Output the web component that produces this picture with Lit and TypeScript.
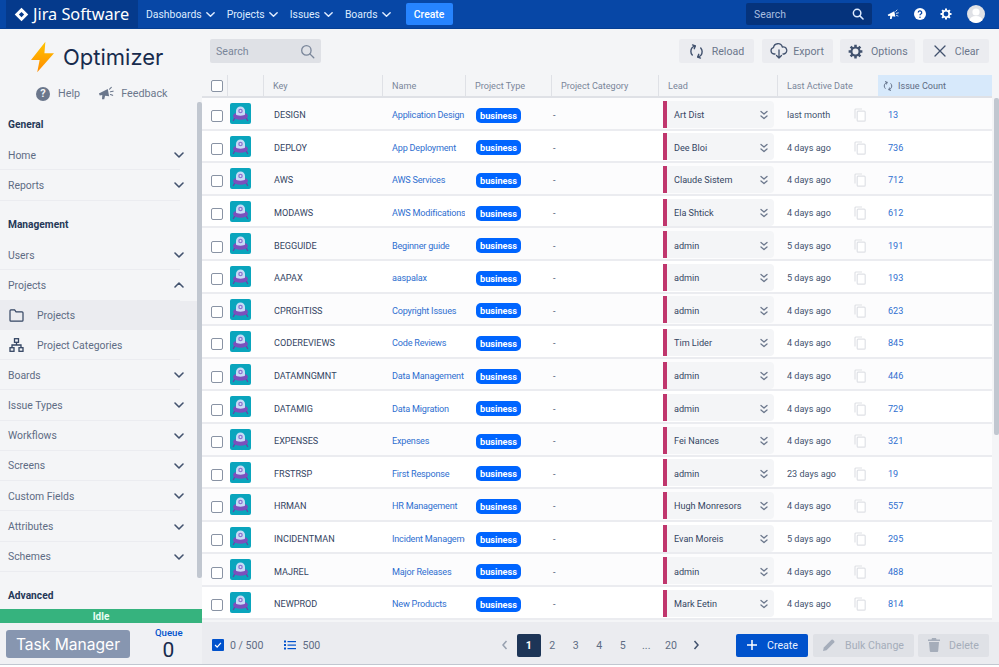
import { LitElement, html, css } from "lit";
import { customElement } from "lit/decorators.js";

const chevDown = html`<svg class="chev" viewBox="0 0 12 12" width="12" height="12"><path d="M2 4l4 4 4-4" fill="none" stroke="currentColor" stroke-width="1.6" stroke-linecap="round" stroke-linejoin="round"/></svg>`;
const chevUp = html`<svg class="chev" viewBox="0 0 12 12" width="12" height="12"><path d="M2 8l4-4 4 4" fill="none" stroke="currentColor" stroke-width="1.6" stroke-linecap="round" stroke-linejoin="round"/></svg>`;
const megaphone = (s: number) => html`<svg viewBox="0 0 18 16" width="${s}" height="${s * 16 / 18}"><path d="M1 8.5l10-5 1.5 8-4.5-.6L7 15H4.5l.3-5L2 10.6z" fill="currentColor"/><path d="M13 3.5l2-2M14 6.5l3-.7M14 9.5l2.5 1" stroke="currentColor" stroke-width="1.2" fill="none" stroke-linecap="round"/></svg>`;
const gear = (s: number) => html`<svg viewBox="0 0 24 24" width="${s}" height="${s}"><path fill="none" stroke="currentColor" stroke-width="3.4" d="M12 5.5a6.5 6.5 0 1 0 0 13 6.5 6.5 0 0 0 0-13z"/><g stroke="currentColor" stroke-width="4"><path d="M12 1v4M12 19v4M1 12h4M19 12h4M4.2 4.2l2.9 2.9M16.9 16.9l2.9 2.9M4.2 19.8l2.9-2.9M16.9 7.1l2.9-2.9"/></g></svg>`;
const reload = (s: number) => html`<svg viewBox="0 0 16 16" width="${s}" height="${s}" fill="none" stroke="currentColor" stroke-width="1.5" stroke-linecap="round" stroke-linejoin="round"><path d="M6.5 2.2C3.8 2.8 2 5 2 8c0 1.5.6 2.8 1.5 3.8"/><path d="M3.8 1l2.9 1.1L5.6 5"/><path d="M9.5 13.8C12.2 13.2 14 11 14 8c0-1.5-.6-2.8-1.5-3.8"/><path d="M12.2 15l-2.9-1.1 1.1-2.9"/></svg>`;
const search = (s: number, w = 1.4) => html`<svg viewBox="0 0 16 16" width="${s}" height="${s}" fill="none" stroke="currentColor" stroke-width="${w}" stroke-linecap="round"><circle cx="6.8" cy="6.8" r="5"/><path d="M10.5 10.5l4.2 4.2"/></svg>`;
const saucer = html`<svg class="pic" viewBox="0 0 21 21" width="21" height="21">
  <rect width="21" height="21" rx="2" fill="#0aa5bd"/>
  <path d="M5 14.5l-1.6 3M16 14.5l1.6 3" stroke="#6a3fa8" stroke-width="1.3" stroke-linecap="round"/>
  <ellipse cx="10.5" cy="13" rx="7.5" ry="3.8" fill="#7b50bd"/>
  <path d="M6 11.5V8a4.5 4.5 0 0 1 9 0v3.5c0 1.5-9 1.5-9 0z" fill="#c6dcf6"/>
  <circle cx="10.5" cy="8" r="2.3" fill="#8d72d0"/><circle cx="10.5" cy="8" r="1" fill="#d7e6fa"/>
</svg>`;
const copy = html`<svg class="copy" viewBox="0 0 12 14" width="12" height="14" fill="none" stroke="#dfe1e6" stroke-width="1.2"><path d="M1 10.5V2a1 1 0 0 1 1-1h6"/><rect x="3.2" y="3.2" width="8" height="10" rx="1" fill="#fff"/></svg>`;
const dbl = html`<svg class="dbl" viewBox="0 0 10 12" width="10" height="12" fill="none" stroke="#6b778c" stroke-width="1.3" stroke-linecap="round" stroke-linejoin="round"><path d="M2 2.5l3 2.5 3-2.5M2 7l3 2.5L8 7"/></svg>`;

const rows: [string, string, string, string, string][] = [
  ["DESIGN", "Application Design", "Art Dist", "last month", "13"],
  ["DEPLOY", "App Deployment", "Dee Bloi", "4 days ago", "736"],
  ["AWS", "AWS Services", "Claude Sistem", "4 days ago", "712"],
  ["MODAWS", "AWS Modifications", "Ela Shtick", "4 days ago", "612"],
  ["BEGGUIDE", "Beginner guide", "admin", "5 days ago", "191"],
  ["AAPAX", "aaspalax", "admin", "5 days ago", "193"],
  ["CPRGHTISS", "Copyright Issues", "admin", "4 days ago", "623"],
  ["CODEREVIEWS", "Code Reviews", "Tim Lider", "4 days ago", "845"],
  ["DATAMNGMNT", "Data Management", "admin", "4 days ago", "446"],
  ["DATAMIG", "Data Migration", "admin", "4 days ago", "729"],
  ["EXPENSES", "Expenses", "Fei Nances", "4 days ago", "321"],
  ["FRSTRSP", "First Response", "admin", "23 days ago", "19"],
  ["HRMAN", "HR Management", "Hugh Monresors", "4 days ago", "557"],
  ["INCIDENTMAN", "Incident Management", "Evan Moreis", "5 days ago", "295"],
  ["MAJREL", "Major Releases", "admin", "4 days ago", "488"],
  ["NEWPROD", "New Products", "Mark Eetin", "4 days ago", "814"],
];

@customElement("app-root")
export class AppRoot extends LitElement {
  static styles = css`
    :host { display: flex; flex-direction: column; width: 999px; height: 667px; overflow: hidden; background: #fff;
      font-family: Roboto, "Noto Sans", sans-serif; font-size: 10px; color: #42526e; }
    * { box-sizing: border-box; }
    svg { display: block; flex: none; }

    header { height: 29px; flex: none; display: flex; align-items: center; background: #0747a6; color: #deebff; border-bottom: 1px solid #053f94; padding-left: 6px; }
    .logo { width: 132px; height: 28px; background: #053a8c; display: flex; align-items: center; gap: 4px; padding-left: 8px; color: #fff; font-family: "Noto Sans", sans-serif; font-size: 16.3px; white-space: nowrap; }
    .nav { display: flex; align-items: center; margin-left: 8px; font-size: 10.4px; }
    .nav .it { display: flex; align-items: center; gap: 3px; margin-right: 11px; }
    .nav .chev { width: 11px; height: 11px; }
    .hcreate { margin-left: 3px; width: 47px; height: 22px; background: #2684ff; color: #fff; border-radius: 2px; font-weight: 500; font-size: 10.4px; display: flex; align-items: center; justify-content: center; }
    .hsearch { margin-left: auto; width: 126px; height: 22px; background: #05337c; border-radius: 2px; display: flex; align-items: center; justify-content: space-between; padding: 0 8px; color: #a9bfe0; font-size: 10.4px; }
    .hsearch svg { color: #deebff; }
    .hicons { display: flex; align-items: center; gap: 14.5px; margin-left: 15px; margin-right: 14.5px; color: #fff; }
    .avatar { width: 18px; height: 18px; border-radius: 50%; background: #dfe1e6; overflow: hidden; }

    .body { flex: 1; display: flex; min-height: 0; }
    aside { width: 202px; flex: none; display: flex; flex-direction: column; background: #f4f5f7; position: relative; }
    .brand { height: 79px; flex: none; padding-top: 12px; }
    .brandrow { display: flex; align-items: center; padding-left: 31px; gap: 9px; height: 32px; font-family: Inter, sans-serif; font-size: 22px; color: #172b4d; }
    .links { display: flex; align-items: center; padding-left: 36px; height: 15px; margin-top: 13px; font-size: 10.8px; color: #6b778c; }
    .links .help { width: 14px; height: 14px; border-radius: 50%; background: #6b778c; color: #f4f5f7; font-weight: 700; font-size: 11px; display: flex; align-items: center; justify-content: center; margin-right: 8px; }
    .links .mega { margin-left: 18px; margin-right: 7px; }
    .snav { flex: 1; min-height: 0; overflow: hidden; }
    .head { height: 32px; display: flex; align-items: center; padding: 1px 0 0 8px; font-size: 10.2px; font-weight: 700; color: #253858; }
    .head.sp { margin-top: 7.4px; }
    .item { height: 30.3px; display: flex; align-items: center; justify-content: space-between; width: 180px; padding: 1px 0 0 8px; border-bottom: 1px solid #ebecf0; font-size: 10.4px; color: #5e6c84; }
    .item .chev { margin-right: -5px; color: #42526e; }
    .sub { height: 29.7px; width: 197px; display: flex; align-items: center; padding-left: 9px; gap: 13px; font-size: 10.4px; color: #5e6c84; }
    .sub.on { background: #ebecf0; }
    .sub svg { color: #344563; }
    .rule { width: 180px; height: 1px; background: #ebecf0; margin-top: -1px; }
    .sbar { position: absolute; left: 197px; top: 73px; width: 5px; height: 476px; background: #c1c7d0; border-radius: 2px; }
    .idle { height: 14px; flex: none; background: #36b37e; color: #e9fff4; font-weight: 700; font-size: 10px; display: flex; align-items: center; justify-content: center; }
    .tm { height: 41px; flex: none; background: #f0f1f4; display: flex; align-items: flex-start; padding: 7px 0 0 6px; }
    .tmb { width: 124px; height: 28px; background: #8796b0; border-radius: 3px; color: #fff; font-family: Inter, sans-serif; font-size: 15.6px; display: flex; align-items: center; justify-content: center; }
    .queue { margin-left: 25px; width: 27px; text-align: center; color: #0052cc; font-size: 9.6px; font-weight: 500; line-height: 11px; margin-top: -3px; }
    .queue b { display: block; font-weight: 400; font-size: 21px; line-height: 24px; color: #172b4d; }

    main { flex: 1; min-width: 0; display: flex; flex-direction: column; background: #f4f5f7; position: relative; }
    .tools { height: 46px; flex: none; display: flex; align-items: flex-start; padding-top: 10px; padding-left: 8px; padding-right: 10px; }
    .tsearch { width: 111px; height: 24px; background: #dfe1e6; border-radius: 2px; display: flex; align-items: center; justify-content: space-between; padding: 0 6px; color: #7a869a; font-size: 10.6px; }
    .btns { margin-left: auto; display: flex; gap: 7.7px; }
    .btn { height: 24px; background: #ebecf0; border-radius: 2px; display: flex; align-items: center; justify-content: center; gap: 8px; font-size: 10.6px; color: #6b778c; }
    .btn svg { color: #42526e; }
    .w75 { width: 75px; }
    .w71 { width: 71px; gap: 5px; }
    .w66 { width: 66px; }

    .table { flex: 1; min-height: 0; overflow: hidden; width: 790px; }
    .r { display: grid; grid-template-columns: 25px 36px 119px 83px 86px 107px 119px 101px 114px; align-items: center; }
    .thead { height: 23px; border-bottom: 2px solid #dfe1e6; color: #7a869a; font-size: 9.1px; }
    .thead > div { height: 21px; display: flex; align-items: center; padding: 1px 0 0 9px; border-left: 1px solid #dfe1e6; }
    .thead > div:first-child { border-left: none; }
    .thead .cnt { background: #d7e9fb; border-left: none; gap: 5px; color: #5e6c84; padding-left: 5px; }
    .tr { height: 32.6px; padding-top: 4px; background: #fff; border-bottom: 2px solid #ebecf0; font-size: 9.1px; color: #42526e; align-items: stretch; }
    .tr:nth-child(odd) { background: #fcfcfd; }
    .tr > div { display: flex; align-items: center; min-width: 0; white-space: nowrap; overflow: hidden; }
    .cb { width: 12px; height: 12px; border: 1.5px solid #8993a4; border-radius: 2px; background: #fff; }
    .tr .c0 { padding-left: 9px; padding-top: 2px; }
    .tr .c1 { padding-left: 3px; align-items: flex-start; padding-top: 1px; }
    .tr .c2 { padding-left: 11px; color: #344563; }
    .tr .c3 { padding-left: 10px; color: #2f6fd0; letter-spacing: -0.2px; }
    .tr .c4 { padding-left: 11px; }
    .badge { height: 15px; width: 45px; border-radius: 5px; background: #0065ff; color: #fff; font-weight: 700; font-size: 9.2px; display: flex; align-items: center; justify-content: center; }
    .tr .c5 { padding-left: 2px; }
    .tr .c6 { padding: 0; overflow: visible; }
    .lead { margin-left: 5px; margin-top: -2px; width: 111px; height: 27px; background: #f4f5f7; border-left: 4px solid #c0366d; border-radius: 0 4px 4px 0; display: flex; align-items: center; justify-content: space-between; padding: 2px 5px 0 7px; color: #344563; }
    .tr .c7 { padding-left: 10px; justify-content: space-between; padding-right: 12px; color: #42526e; }
    .tr .c8 { padding-left: 10px; color: #2f6fd0; }
    .vbar { position: absolute; left: 792px; top: 69px; width: 5px; height: 337px; background: #c1c7d0; border-radius: 2px; }

    .foot { height: 42px; flex: none; background: #ebecf0; display: flex; align-items: center; padding: 4px 10px 0 10px; font-size: 10.6px; color: #5e6c84; }
    .left { width: 281px; flex: none; display: flex; align-items: center; }
    .chk { width: 12px; height: 12px; background: #0052cc; border-radius: 1px; display: flex; align-items: center; justify-content: center; margin-right: 6px; }
    .count { margin-left: 21px; display: flex; align-items: center; gap: 6px; }
    .count svg { color: #0052cc; }
    .pages { display: flex; align-items: center; color: #5e6c84; }
    .pages .p { width: 23.5px; height: 23px; display: flex; align-items: center; justify-content: center; }
    .pages .cur { background: #1d3557; color: #fff; border-radius: 2px; font-weight: 700; }
    .pages .arr { width: 24px; color: #97a0af; }
    .pages .next { color: #42526e; }
    .pages .wide { width: 26px; }
    .fbtns { margin-left: auto; display: flex; gap: 4.5px; }
    .act { height: 23px; border-radius: 2px; display: flex; align-items: center; justify-content: center; gap: 9px; background: #dfe1e6; color: #a5adba; }
    .act.pri { background: #0052cc; color: #e9f1ff; width: 72px; }
    .act.bulk { width: 101px; }
    .act.del { width: 71px; }
    .strip { height: 3px; flex: none; background: #fff; border-top: 1px solid #c1c7d0; }
  `;

  renderRow(r: [string, string, string, string, string]) {
    return html`<div class="r tr">
      <div class="c0"><div class="cb"></div></div>
      <div class="c1">${saucer}</div>
      <div class="c2">${r[0]}</div>
      <div class="c3">${r[1]}</div>
      <div class="c4"><div class="badge">business</div></div>
      <div class="c5">-</div>
      <div class="c6"><div class="lead"><span>${r[2]}</span>${dbl}</div></div>
      <div class="c7"><span>${r[3]}</span>${copy}</div>
      <div class="c8">${r[4]}</div>
    </div>`;
  }

  render() {
    const item = (t: string, up = false) => html`<div class="item"><span>${t}</span>${up ? chevUp : chevDown}</div>`;
    return html`
      <header>
        <div class="logo">
          <svg viewBox="0 0 16 16" width="15" height="15"><path d="M8 .8L15.2 8 8 15.2.8 8z" fill="#fff"/><path d="M8 5.2L10.8 8 8 10.8 5.2 8z" fill="#053a8c"/></svg>
          <span>Jira Software</span>
        </div>
        <div class="nav">
          <div class="it">Dashboards ${chevDown}</div>
          <div class="it">Projects ${chevDown}</div>
          <div class="it">Issues ${chevDown}</div>
          <div class="it">Boards ${chevDown}</div>
        </div>
        <div class="hcreate">Create</div>
        <div class="hsearch"><span>Search</span>${search(12, 2)}</div>
        <div class="hicons">
          ${megaphone(12)}
          <svg viewBox="0 0 14 14" width="12" height="12"><circle cx="7" cy="7" r="7" fill="#fff"/><path d="M5 5.3a2 2 0 1 1 3 1.7c-.7.4-1 .8-1 1.5" fill="none" stroke="#0747a6" stroke-width="1.5"/><circle cx="7" cy="10.7" r=".9" fill="#0747a6"/></svg>
          ${gear(12)}
          <div class="avatar"><svg viewBox="0 0 18 18" width="18" height="18"><circle cx="9" cy="7" r="3.6" fill="#fff"/><ellipse cx="9" cy="15.5" rx="6.5" ry="4.5" fill="#fff"/></svg></div>
        </div>
      </header>
      <div class="body">
        <aside>
          <div class="brand">
            <div class="brandrow">
              <svg viewBox="0 0 24 32" width="23" height="32"><defs><linearGradient id="b" x1="0" y1="0" x2="0" y2="1"><stop offset="0" stop-color="#ffc400"/><stop offset="1" stop-color="#ff8b00"/></linearGradient></defs><path d="M15 0L0 19h9L6.5 32 24 12h-10z" fill="url(#b)"/></svg>
              <span>Optimizer</span>
            </div>
            <div class="links">
              <div class="help">?</div><span>Help</span>
              <div class="mega">${megaphone(16)}</div><span>Feedback</span>
            </div>
          </div>
          <div class="snav">
            <div class="head">General</div>
            ${item("Home")}${item("Reports")}
            <div class="head sp">Management</div>
            ${item("Users")}${item("Projects", true)}
            <div class="sub on">
              <svg viewBox="0 0 16 14" width="15" height="13" fill="none" stroke="currentColor" stroke-width="1.3"><path d="M1 12V2a1 1 0 0 1 1-1h4l1.5 2H14a1 1 0 0 1 1 1v8a1 1 0 0 1-1 1H2a1 1 0 0 1-1-1z"/></svg>
              <span>Projects</span>
            </div>
            <div class="sub">
              <svg viewBox="0 0 15 14" width="15" height="14" fill="none" stroke="currentColor" stroke-width="1.3"><rect x="5.5" y=".7" width="4" height="3.6"/><rect x="1" y="9.7" width="4" height="3.6"/><rect x="10" y="9.7" width="4" height="3.6"/><path d="M7.5 4.3V7M3 9.7V7h9v2.7"/></svg>
              <span>Project Categories</span>
            </div>
            <div class="rule"></div>
            ${["Boards", "Issue Types", "Workflows", "Screens", "Custom Fields", "Attributes", "Schemes"].map((t) => item(t))}
            <div class="head sp">Advanced</div>
          </div>
          <div class="sbar"></div>
          <div class="idle">Idle</div>
          <div class="tm">
            <div class="tmb">Task Manager</div>
            <div class="queue">Queue<b>0</b></div>
          </div>
        </aside>
        <main>
          <div class="tools">
            <div class="tsearch"><span>Search</span>${search(15)}</div>
            <div class="btns">
              <div class="btn w75">${reload(15)}<span>Reload</span></div>
              <div class="btn w71"><svg viewBox="0 0 18 16" width="18" height="16" fill="none" stroke="currentColor" stroke-width="1.3" stroke-linecap="round" stroke-linejoin="round"><path d="M5 11H4a3.2 3.2 0 0 1-.5-6.3A4.5 4.5 0 0 1 12.3 4 3.5 3.5 0 0 1 14 11h-1"/><path d="M9 7v8M6.5 12.5L9 15l2.5-2.5"/></svg><span>Export</span></div>
              <div class="btn w75">${gear(15)}<span>Options</span></div>
              <div class="btn w66"><svg viewBox="0 0 14 14" width="14" height="14" fill="none" stroke="currentColor" stroke-width="1.3" stroke-linecap="round"><path d="M2 2l10 10M12 2L2 12"/></svg><span>Clear</span></div>
            </div>
          </div>
          <div class="table">
            <div class="r thead">
              <div><div class="cb"></div></div><div></div>
              <div>Key</div><div>Name</div><div>Project Type</div><div>Project Category</div><div>Lead</div><div>Last Active Date</div>
              <div class="cnt">${reload(10)}<span>Issue Count</span></div>
            </div>
            <div>${rows.map((r) => this.renderRow(r))}</div>
          </div>
          <div class="vbar"></div>
          <div class="foot">
            <div class="left">
              <div class="chk"><svg viewBox="0 0 12 12" width="10" height="10"><path d="M2.5 6l2.5 2.5 4.5-5" fill="none" stroke="#fff" stroke-width="1.5"/></svg></div>
              <span>0 / 500</span>
              <div class="count">
                <svg viewBox="0 0 12 10" width="12" height="10" fill="currentColor"><rect x="0" y=".5" width="2" height="2"/><rect x="0" y="4" width="2" height="2"/><rect x="0" y="7.5" width="2" height="2"/><rect x="3.5" y="1" width="8.5" height="1.2"/><rect x="3.5" y="4.5" width="8.5" height="1.2"/><rect x="3.5" y="8" width="8.5" height="1.2"/></svg>
                <span>500</span>
              </div>
            </div>
            <div class="pages">
              <div class="p arr"><svg viewBox="0 0 12 12" width="12" height="12"><path d="M7.5 2L4 6l3.5 4" fill="none" stroke="currentColor" stroke-width="1.5"/></svg></div>
              <div class="p cur">1</div><div class="p">2</div><div class="p">3</div><div class="p">4</div><div class="p">5</div><div class="p">...</div><div class="p wide">20</div>
              <div class="p arr next"><svg viewBox="0 0 12 12" width="12" height="12"><path d="M4.5 2L8 6l-3.5 4" fill="none" stroke="currentColor" stroke-width="1.5"/></svg></div>
            </div>
            <div class="fbtns">
              <div class="act pri"><svg viewBox="0 0 12 12" width="12" height="12"><path d="M6 1v10M1 6h10" stroke="#fff" stroke-width="1.5"/></svg><span>Create</span></div>
              <div class="act bulk"><svg viewBox="0 0 14 14" width="14" height="14" fill="currentColor"><path d="M1 13l.8-3.5L9.5 1.8a1 1 0 0 1 1.4 0l1.3 1.3a1 1 0 0 1 0 1.4L4.5 12.2z"/></svg><span>Bulk Change</span></div>
              <div class="act del"><svg viewBox="0 0 12 14" width="12" height="14" fill="currentColor"><path d="M4 0h4l.5 1.5H12V3H0V1.5h3.5zM1 4h10l-.8 9a1 1 0 0 1-1 1H2.8a1 1 0 0 1-1-1z"/></svg><span>Delete</span></div>
            </div>
          </div>
        </main>
      </div>
      <div class="strip"></div>
    `;
  }
}
